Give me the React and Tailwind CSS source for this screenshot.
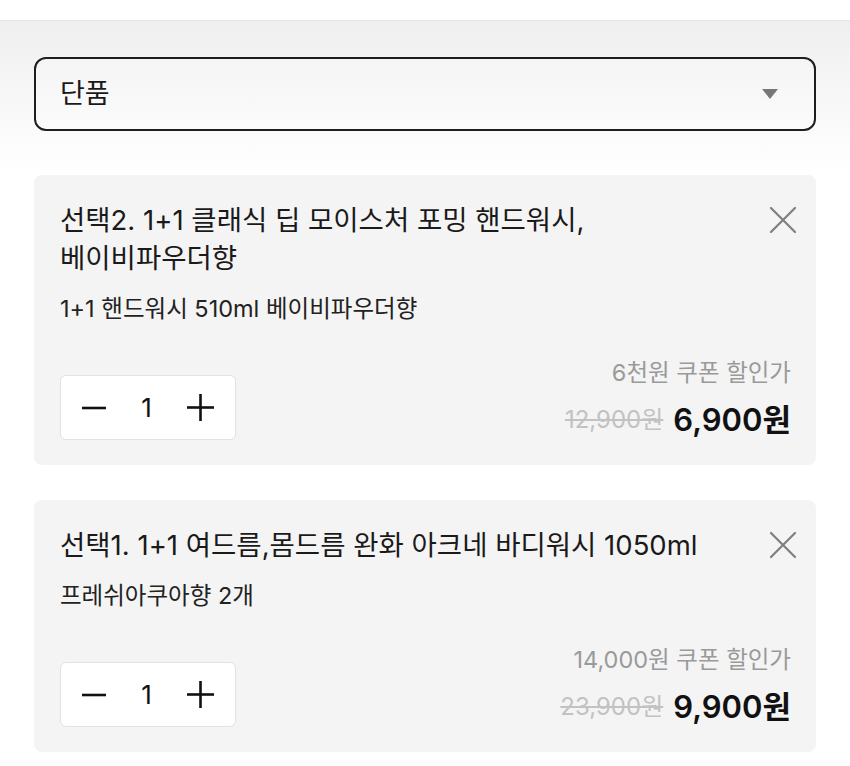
const items = [
  {
    id: 2,
    title: '선택2. 1+1 클래식 딥 모이스처 포밍 핸드워시, 베이비파우더향',
    option: '1+1 핸드워시 510ml 베이비파우더향',
    coupon: '6천원 쿠폰 할인가',
    original: '12,900원',
    price: '6,900원',
    qty: 1,
  },
  {
    id: 1,
    title: '선택1. 1+1 여드름,몸드름 완화 아크네 바디워시 1050ml',
    option: '프레쉬아쿠아향 2개',
    coupon: '14,000원 쿠폰 할인가',
    original: '23,900원',
    price: '9,900원',
    qty: 1,
  },
];

const fontStack = { fontFamily: '"Inter", "Noto Sans CJK KR", "Noto Sans", sans-serif' };

const Stepper = ({ qty }) => (
  <div className="flex h-[65px] w-[176px] items-center justify-between rounded-md border border-[#e2e2e2] bg-white px-[20px]">
    <button type="button" className="flex h-[30px] w-[26px] items-center justify-center">
      <svg width="26" height="26" viewBox="0 0 26 26">
        <line x1="1" y1="13" x2="25" y2="13" stroke="#111" strokeWidth="2.6" />
      </svg>
    </button>
    <span className="text-[26px] leading-none text-[#111]">{qty}</span>
    <button type="button" className="flex h-[30px] w-[29px] items-center justify-center">
      <svg width="29" height="29" viewBox="0 0 29 29">
        <line x1="1" y1="14.5" x2="28" y2="14.5" stroke="#111" strokeWidth="2.6" />
        <line x1="14.5" y1="1" x2="14.5" y2="28" stroke="#111" strokeWidth="2.6" />
      </svg>
    </button>
  </div>
);

const CloseIcon = () => (
  <svg width="28" height="28" viewBox="0 0 28 28">
    <path d="M2 2 L26 26 M26 2 L2 26" stroke="#7f7f7f" strokeWidth="2.2" strokeLinecap="round" />
  </svg>
);

const CartItem = ({ item }) => (
  <div className="rounded-lg bg-[#f4f4f4] pb-[25px] pl-[26px] pr-[25px] pt-[26px]">
    <div className="flex items-start gap-4">
      <h3 className="flex-1 break-keep pr-[36px] text-[27.5px] leading-[38px] text-[#1a1a1a]">{item.title}</h3>
      <button type="button" className="-mr-[6px] mt-[5px]">
        <CloseIcon />
      </button>
    </div>
    <p className="mt-[17px] text-[23.5px] leading-[30px] text-[#222]">{item.option}</p>
    <div className="mt-[34px] flex items-end justify-between">
      <Stepper qty={item.qty} />
      <div className="flex flex-col items-end">
        <span className="text-[23.5px] leading-[30px] text-[#9a9a9a]">{item.coupon}</span>
        <div className="mt-[12px] flex items-center gap-[10px]">
          <span className="text-[24px] leading-[30px] text-[#c2c2c2] line-through">{item.original}</span>
          <span className="text-[31px] font-semibold leading-[40px] text-[#111]">{item.price}</span>
        </div>
      </div>
    </div>
  </div>
);

export default function App() {
  return (
    <div className="min-h-screen bg-white" style={fontStack}>
      <div className="h-[21px] border-b border-[#e6e6e6] bg-white" />
      <div className="bg-gradient-to-b from-[#efefef] to-white to-[150px] px-[34px] pb-[14px] pt-[36px]">
        <div className="flex h-[74px] items-center justify-between rounded-xl border-2 border-[#1e1e1e] bg-gradient-to-b from-[#f5f5f5] to-[#fbfbfb] pl-[24px] pr-[36px]">
          <span className="text-[27px] text-[#1a1a1a]">단품</span>
          <svg width="16" height="10" viewBox="0 0 16 10">
            <path d="M0 0 H16 L8 10 Z" fill="#777" />
          </svg>
        </div>
        <div className="mt-[44px] flex flex-col gap-[35px]">
          {items.map((item) => (
            <CartItem key={item.id} item={item} />
          ))}
        </div>
      </div>
    </div>
  );
}
